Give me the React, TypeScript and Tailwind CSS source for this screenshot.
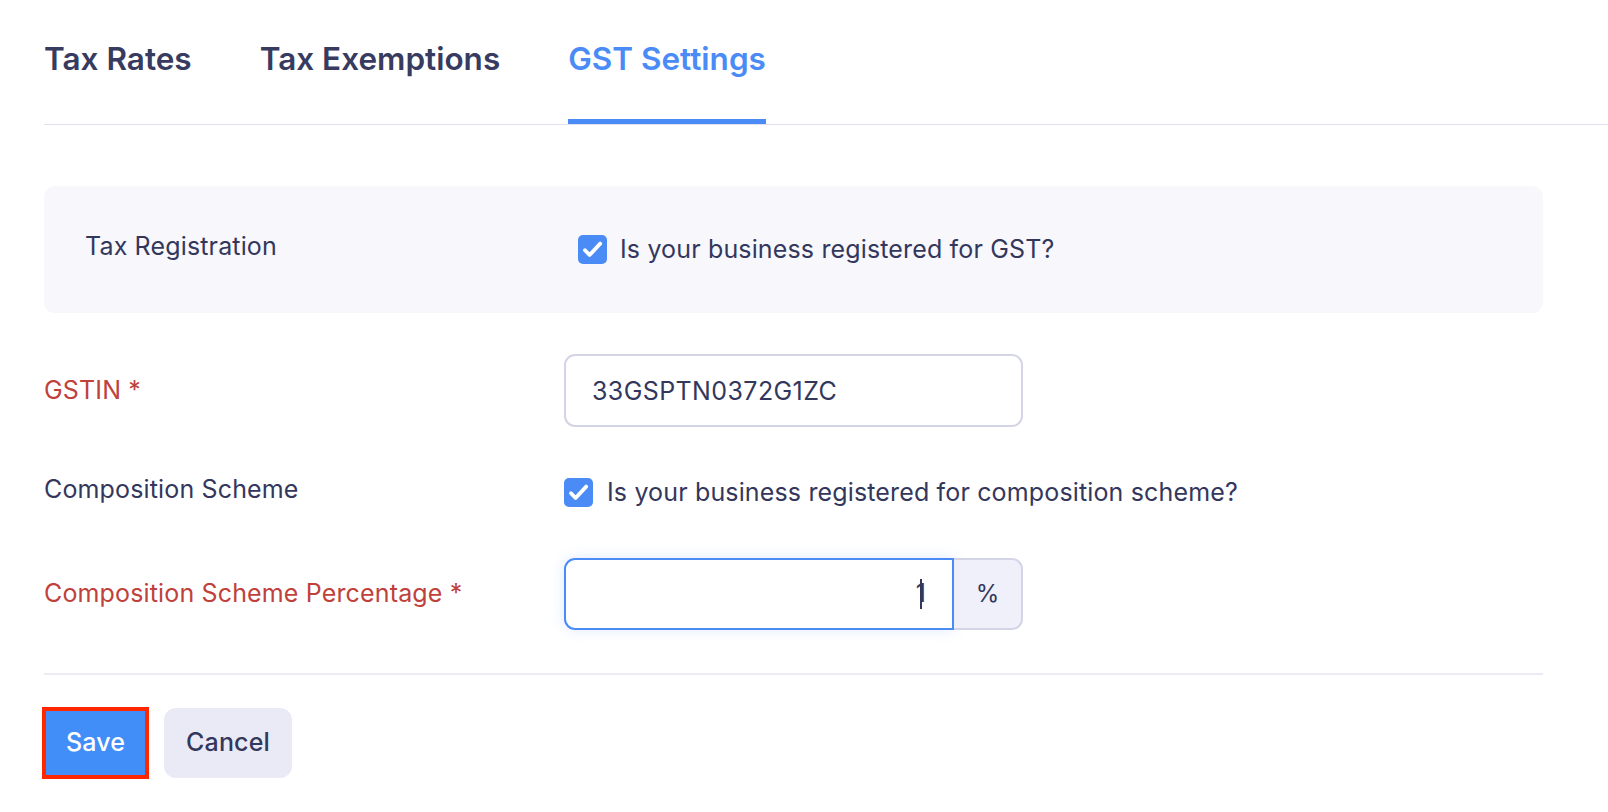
import React, { useState } from 'react';

const Check: React.FC<{ checked: boolean; onChange: () => void }> = ({ checked, onChange }) => (
  <button
    type="button"
    onClick={onChange}
    className={`w-[29px] h-[29px] rounded-[5px] flex items-center justify-center shrink-0 ${checked ? 'bg-[#4a8bf6]' : 'bg-white border-2 border-[#cfd0e3]'}`}
  >
    {checked && (
      <svg width="29" height="29" viewBox="0 0 29 29" fill="none">
        <path d="M7 15.2l4.6 4.8L22.2 8.6" stroke="white" strokeWidth="3.8" strokeLinecap="round" strokeLinejoin="round" />
      </svg>
    )}
  </button>
);

const App: React.FC = () => {
  const [tab, setTab] = useState('gst');
  const [registered, setRegistered] = useState(true);
  const [composition, setComposition] = useState(true);
  const [gstin, setGstin] = useState('33GSPTN0372G1ZC');
  const [percent, setPercent] = useState('1');

  const tabs = [
    { id: 'rates', label: 'Tax Rates' },
    { id: 'exempt', label: 'Tax Exemptions' },
    { id: 'gst', label: 'GST Settings' },
  ];

  return (
    <div className="min-h-screen bg-white pl-[44px] text-[#34375c] font-['Inter','Noto_Sans',sans-serif]">
      <div className="flex gap-[68px] h-[125px] border-b-[1.5px] border-[#dfe0f1]">
        {tabs.map(t => (
          <button
            key={t.id}
            onClick={() => setTab(t.id)}
            className={`h-full flex items-center pb-[2px] border-b-[5px] -mb-[1.5px] text-[31.5px] font-semibold ${tab === t.id ? 'border-[#4a8bf6] text-[#4a8bf6]' : 'border-transparent text-[#383b60]'}`}
          >
            {t.label}
          </button>
        ))}
      </div>

      <div className="w-[1499px] text-[25px] tracking-[0.15px]">
        <div className="mt-[61px] h-[127px] rounded-[11px] bg-[#f7f7fc] pl-[41px] flex items-center">
          <div className="w-[493px] -mt-[6px]">Tax Registration</div>
          <label className="flex items-center gap-[13px]">
            <Check checked={registered} onChange={() => setRegistered(!registered)} />
            <span>Is your business registered for GST?</span>
          </label>
        </div>

        <div className="mt-[41px] flex items-center">
          <div className="w-[520px] text-[#c0413c]">GSTIN *</div>
          <input
            value={gstin}
            onChange={e => setGstin(e.target.value)}
            className="w-[459px] h-[73px] rounded-[11px] border-2 border-[#d3d4e6] px-[26px] tracking-[0.4px] text-[#34375c] outline-none"
          />
        </div>

        {registered && (
          <>
            <div className="mt-[47px] flex items-center">
              <div className="w-[520px] -mt-[6px]">Composition Scheme</div>
              <label className="flex items-center gap-[14px]">
                <Check checked={composition} onChange={() => setComposition(!composition)} />
                <span>Is your business registered for composition scheme?</span>
              </label>
            </div>

            <div className="mt-[46px] flex items-center">
              <div className="w-[520px] text-[#c0413c]">Composition Scheme Percentage *</div>
              <div className="flex w-[459px] h-[72px]">
                <div className="w-[390px] h-full rounded-l-[11px] border-2 border-[#4a8bf6] pr-[30px] flex items-center justify-end text-[#34375c] shadow-[0_0_14px_rgba(74,139,246,0.18)]">
                  <input
                    value={percent}
                    onChange={e => setPercent(e.target.value)}
                    className="w-full text-right outline-none bg-transparent"
                  />
                  <span className="w-[2px] h-[30px] bg-[#34375c] -ml-[6px]" />
                </div>
                <div className="flex-1 h-full rounded-r-[11px] border-2 border-l-0 border-[#d3d4e6] bg-[#f0f0fa] flex items-center justify-center text-[24px]">
                  %
                </div>
              </div>
            </div>
          </>
        )}

        <div className="mt-[43px] h-[2px] bg-[#ebebf5]" />

        <div className="mt-[33px] flex items-center gap-[19px]">
          <button className="ml-[2px] w-[99px] h-[64px] bg-[#428ef9] text-white font-medium outline-[4px] outline-solid outline-[#ff2600]">
            Save
          </button>
          <button className="w-[128px] h-[70px] rounded-[12px] bg-[#e9eaf5] font-medium text-[#34375c]">
            Cancel
          </button>
        </div>
      </div>
    </div>
  );
};

export default App;
